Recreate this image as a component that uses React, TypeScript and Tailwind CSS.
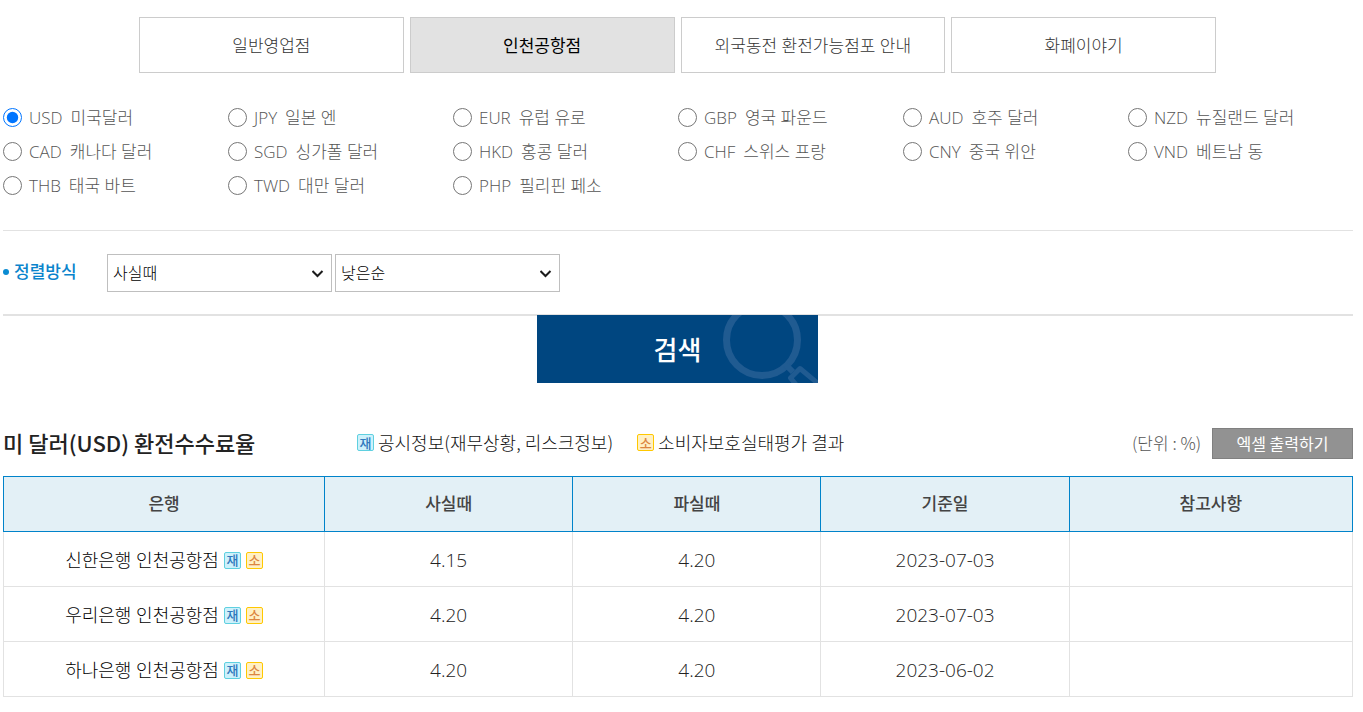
import { useState } from "react";

const tabs = ["일반영업점", "인천공항점", "외국동전 환전가능점포 안내", "화폐이야기"];

const currencies = [
  ["USD", "미국달러"],
  ["JPY", "일본 엔"],
  ["EUR", "유럽 유로"],
  ["GBP", "영국 파운드"],
  ["AUD", "호주 달러"],
  ["NZD", "뉴질랜드 달러"],
  ["CAD", "캐나다 달러"],
  ["SGD", "싱가폴 달러"],
  ["HKD", "홍콩 달러"],
  ["CHF", "스위스 프랑"],
  ["CNY", "중국 위안"],
  ["VND", "베트남 동"],
  ["THB", "태국 바트"],
  ["TWD", "대만 달러"],
  ["PHP", "필리핀 페소"],
];

const rows = [
  { bank: "신한은행 인천공항점", buy: "4.15", forfeit: "4.20", date: "2023-07-03" },
  { bank: "우리은행 인천공항점", buy: "4.20", forfeit: "4.20", date: "2023-07-03" },
  { bank: "하나은행 인천공항점", buy: "4.20", forfeit: "4.20", date: "2023-06-02" },
];

function FinanceBadge() {
  return (
    <span className="inline-flex h-[17px] w-[17px] shrink-0 items-center justify-center rounded-xs border border-[#5fd0e0] bg-[#cdf1fb] text-[13px] leading-none font-medium text-[#2f78bd]">
      재
    </span>
  );
}

function ConsumerBadge() {
  return (
    <span className="inline-flex h-[17px] w-[17px] shrink-0 items-center justify-center rounded-xs border border-[#ffc800] bg-[#fff0c4] text-[13px] leading-none font-medium text-[#dc8540]">
      소
    </span>
  );
}

function SortSelect({ label, options }: { label: string; options: string[] }) {
  return (
    <div className="relative">
      <select
        aria-label={label}
        className="block h-[38px] w-[225px] appearance-none border border-[#bfbfbf] bg-white px-[5px] text-[16px] font-light text-black"
      >
        {options.map((option) => (
          <option key={option}>{option}</option>
        ))}
      </select>
      <svg
        className="pointer-events-none absolute top-4 right-2 h-2 w-3"
        viewBox="0 0 12 8"
        fill="none"
        stroke="#1c1c1c"
        strokeWidth="2"
        aria-hidden="true"
      >
        <path d="M0.5 1 L5.5 6 L10.5 1" />
      </svg>
    </div>
  );
}

export default function App() {
  const [tab, setTab] = useState(1);
  const [currency, setCurrency] = useState("USD");

  return (
    <main className="bg-white pt-[17px] pr-[10px] pb-4 pl-[3px] font-['Open_Sans','Noto_Sans_CJK_KR',sans-serif] font-light text-[#555]">
      <nav className="mr-[137px] ml-[136px] grid grid-cols-4 gap-1.5">
        {tabs.map((name, i) => (
          <button
            key={name}
            type="button"
            onClick={() => setTab(i)}
            className={
              i === tab
                ? "h-14 border border-[#ccc] bg-[#e2e2e2] pt-0.5 text-[17px] font-normal text-black"
                : "h-14 border border-[#ccc] bg-white pt-0.5 text-[17px] font-light text-[#333]"
            }
          >
            {name}
          </button>
        ))}
      </nav>

      <form onSubmit={(e) => e.preventDefault()}>
        <fieldset aria-label="통화" className="mt-[27px] grid grid-cols-6">
          {currencies.map(([code, name]) => (
            <label key={code} className="flex h-[34px] items-center text-[17px] whitespace-nowrap">
              <input
                type="radio"
                name="currency"
                value={code}
                checked={currency === code}
                onChange={() => setCurrency(code)}
                className="mr-[7px] size-[19px] accent-[#0075ff]"
              />
              <span className="mr-2 pt-0.5">{code}</span>
              <span className="pt-0.5">{name}</span>
            </label>
          ))}
        </fieldset>

        <div className="mt-7 flex items-center border-t border-b-2 border-t-[#e2e2e2] border-b-[#e2e2e2] pt-[23px] pb-[22px]">
          <div className="flex w-[104px] items-center gap-[5px] pb-[3px]">
            <span className="size-1.5 rounded-full bg-[#0a8bd2]" />
            <span className="text-[17px] font-medium text-[#0a84cc]">정렬방식</span>
          </div>
          <div className="flex gap-[3px]">
            <SortSelect label="정렬 기준" options={["사실때", "파실때"]} />
            <SortSelect label="정렬 순서" options={["낮은순", "높은순"]} />
          </div>
        </div>

        <div className="-mt-px flex justify-center pr-px">
          <button
            type="submit"
            className="relative h-[68px] w-[281px] overflow-hidden bg-[#004680] pt-[3px] text-[26px] font-medium text-white"
          >
            <svg
              className="absolute top-0 right-0 h-[68px] w-[100px]"
              viewBox="0 0 100 68"
              fill="none"
              stroke="#205b91"
              aria-hidden="true"
            >
              <circle cx="44" cy="25" r="35.5" strokeWidth="7" />
              <path d="M68 50 L75 57" strokeWidth="6" />
              <path d="M80 72 L72.500 63 L82 53.500 L103 71" strokeWidth="5" strokeLinejoin="round" />
            </svg>
            <span className="relative">검색</span>
          </button>
        </div>
      </form>

      <header className="mt-11 flex h-8 items-center font-['Noto_Sans_CJK_KR',sans-serif]">
        <h1 className="w-[354px] pb-0.5 text-[22px] font-medium whitespace-nowrap text-[#222]">미 달러(USD) 환전수수료율</h1>
        <p className="flex items-center gap-1 pb-0.5 text-[18px] whitespace-nowrap text-[#111]">
          <FinanceBadge />
          공시정보(재무상황, 리스크정보)
        </p>
        <p className="ml-6 flex items-center gap-1 pb-0.5 text-[18px] whitespace-nowrap text-[#111]">
          <ConsumerBadge />
          소비자보호실태평가 결과
        </p>
        <span className="mr-[11px] ml-auto text-[17px] whitespace-nowrap">(단위 : %)</span>
        <button
          type="button"
          className="h-[31px] w-[141px] border border-[#808080] bg-[#929292] text-[16px] font-normal text-white"
        >
          엑셀 출력하기
        </button>
      </header>

      <table className="mt-[17px] w-full table-fixed border-collapse text-center">
        <colgroup>
          <col className="w-[23.8%]" />
          <col className="w-[18.4%]" />
          <col className="w-[18.4%]" />
          <col className="w-[18.4%]" />
          <col className="w-[21%]" />
        </colgroup>
        <thead>
          <tr>
            {["은행", "사실때", "파실때", "기준일", "참고사항"].map((h) => (
              <th
                key={h}
                scope="col"
                className="h-[55px] border border-[#0083ca] bg-[#e3f0f6] text-[17px] font-medium text-[#444]"
              >
                {h}
              </th>
            ))}
          </tr>
        </thead>
        <tbody className="text-[19px] text-[#222]">
          {rows.map((row) => (
            <tr key={row.bank}>
              <td className="h-[55px] border border-[#e2e2e2] pt-[3px] text-[18px] text-black">
                <div className="flex items-center justify-center gap-[5px]">
                  {row.bank}
                  <FinanceBadge />
                  <ConsumerBadge />
                </div>
              </td>
              <td className="border border-[#e2e2e2] pt-[3px]">{row.buy}</td>
              <td className="border border-[#e2e2e2] pt-[3px]">{row.forfeit}</td>
              <td className="border border-[#e2e2e2] pt-[3px]">{row.date}</td>
              <td className="border border-[#e2e2e2]" />
            </tr>
          ))}
        </tbody>
      </table>
    </main>
  );
}
